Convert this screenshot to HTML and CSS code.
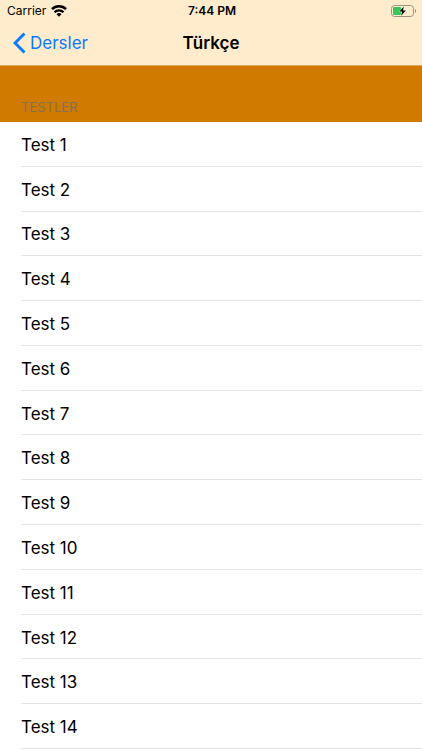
FILE: index.html
```html
<!DOCTYPE html>
<html lang="tr">
<head>
  <meta charset="UTF-8" />
  <meta name="viewport" content="width=device-width, initial-scale=1.0"/>
  <title>Türkçe</title>
  <link rel="stylesheet" href="styles.css">
</head>
<body>
  <header class="top">
    <div class="status">
      <div class="carrier">
        <span>Carrier</span>
        <svg class="wifi" viewBox="0 0 16 12" width="16" height="12">
          <path d="M1 4.200a10 10 0 0 1 14 0" fill="none" stroke="#000" stroke-width="2.500"/>
          <path d="M3.500 7.200a6.300 6.300 0 0 1 9 0" fill="none" stroke="#000" stroke-width="2.300"/>
          <path d="M5.500 9.200a3.500 3.500 0 0 1 5 0L8 11.800z"/>
        </svg>
      </div>
      <time class="clock">7:44 PM</time>
      <svg class="battery" viewBox="0 0 26 12" width="26" height="12">
        <rect x="0.5" y="0.5" width="22" height="11" rx="3" fill="none" stroke="#9c9283"/>
        <path d="M24 4v4c1.500-.4 1.500-3.600 0-4z" fill="#9c9283"/>
        <rect x="2" y="2" width="8" height="8" rx="1" fill="#35c759"/>
        <path d="M12.800 1.500L8.400 6.600h2.700L10.200 10.700l4.600-5.300h-2.800z" fill="#000" stroke="#ffeccc" stroke-width="1" paint-order="stroke"/>
      </svg>
    </div>
    <nav class="navbar">
      <a class="back" href="#">
        <svg viewBox="0 0 13 22" width="13" height="22">
          <path d="M11.500 1.500L2 11l9.500 9.500" fill="none" stroke="#0a7aff" stroke-width="3"/>
        </svg>
        <span>Dersler</span>
      </a>
      <h1>Türkçe</h1>
    </nav>
  </header>
  <main>
    <h2>TESTLER</h2>
    <ul class="tests">
      <li><a href="#">Test 1</a></li>
      <li><a href="#">Test 2</a></li>
      <li><a href="#">Test 3</a></li>
      <li><a href="#">Test 4</a></li>
      <li><a href="#">Test 5</a></li>
      <li><a href="#">Test 6</a></li>
      <li><a href="#">Test 7</a></li>
      <li><a href="#">Test 8</a></li>
      <li><a href="#">Test 9</a></li>
      <li><a href="#">Test 10</a></li>
      <li><a href="#">Test 11</a></li>
      <li><a href="#">Test 12</a></li>
      <li><a href="#">Test 13</a></li>
      <li><a href="#">Test 14</a></li>
    </ul>
  </main>
</body>
</html>
```
FILE: styles.css
```css
* {
  box-sizing: border-box;
}
body {
  margin: 0;
  min-height: 100vh;
  display: flex;
  flex-direction: column;
  background: #fff;
  color: #000;
  font-family: Inter, "Liberation Sans", sans-serif;
  font-size: 17px;
}
.top {
  background: #ffeccc;
  border-bottom: 1px solid #d9a95c;
}
.status, .navbar {
  display: grid;
  grid-template-columns: 1fr auto 1fr;
  align-items: center;
}
.status {
  height: 21px;
  padding: 0 5px 0 7px;
  font-size: 12px;
}
.carrier {
  display: flex;
  align-items: center;
  gap: 5px;
}
.clock {
  font-weight: 600;
}
.battery {
  justify-self: end;
}
.navbar {
  height: 44px;
  padding: 0 13px;
}
.back {
  display: flex;
  align-items: center;
  gap: 4px;
  color: #0a7aff;
  text-decoration: none;
}
h1 {
  margin: 0;
  font-size: 17px;
  font-weight: 600;
}
main {
  flex: 1;
  display: flex;
  flex-direction: column;
}
h2 {
  margin: 0;
  padding: 33px 21px 7px;
  background: #d07a00;
  color: #857052;
  font-size: 13px;
  font-weight: 400;
  line-height: 16px;
}
.tests {
  flex: 1;
  display: grid;
  grid-auto-rows: 1fr;
  margin: 0;
  padding: 0 0 1px 21px;
  list-style: none;
}
.tests li {
  display: flex;
  min-height: 44px;
  border-bottom: 1px solid #e6e6e8;
}
.tests a {
  flex: 1;
  display: flex;
  align-items: center;
  padding-top: 2px;
  color: #000;
  text-decoration: none;
}
```
